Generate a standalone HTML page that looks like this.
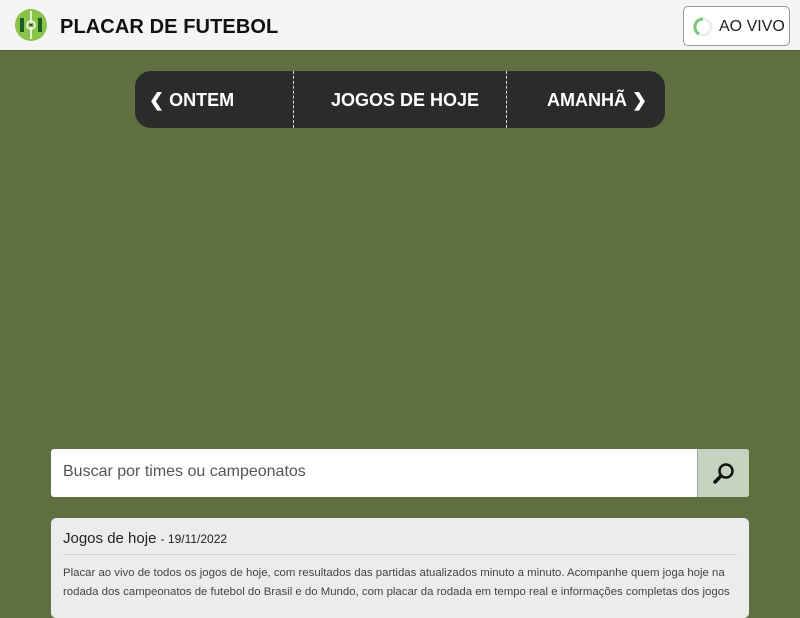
<!DOCTYPE html>
<html><head><meta charset="utf-8"><style>
*{margin:0;padding:0;box-sizing:border-box}
body{width:800px;height:600px;overflow:hidden;background:#5f6f40;font-family:"Liberation Sans",sans-serif}
.hdr{position:absolute;left:0;top:0;width:800px;height:51px;background:#f5f5f5;border-bottom:1px solid #4c5a33}
.logo{position:absolute;left:15px;top:9px}
.title{position:absolute;left:60px;top:16px;font-weight:bold;font-size:20px;color:#111;letter-spacing:0.1px}
.live{position:absolute;left:683px;top:6px;width:107px;height:40px;border:1px solid #999;border-radius:5px;background:#fff}
.live span{position:absolute;left:35px;top:11px;font-size:16px;color:#222}
.nav{position:absolute;left:135px;top:71px;width:530px;height:57px;background:#2b2b2b;border-radius:16px;color:#fff;font-weight:bold;font-size:18px}
.nav div{position:absolute;top:19px}
.d{position:absolute;top:0;width:0;height:57px;border-left:1px dashed #ddd}
.search{position:absolute;left:51px;top:449px;width:698px;height:48px;background:#fff;border-radius:3px;overflow:hidden}
.search span{position:absolute;left:12px;top:14px;font-size:16px;color:#555}
.btn{position:absolute;right:0;top:0;width:52px;height:48px;background:#c3d3bf;border-left:1px solid #9aa}
.card{position:absolute;left:51px;top:518px;width:698px;height:100px;background:#ebecee;border-radius:5px}
.card h2{position:absolute;left:12px;top:12px;font-size:15px;font-weight:normal;color:#222}
.card h2 small{font-size:12px}
.card hr{position:absolute;left:12px;top:36px;width:674px;border:0;border-top:1px solid #d0d0d0}
.card p{position:absolute;left:12px;top:46px;white-space:nowrap;font-size:11.4px;line-height:19px;color:#444}
</style></head><body>
<div class="hdr">
<svg class="logo" width="32" height="32" viewBox="0 0 32 32"><circle cx="16" cy="16" r="16" fill="#8bc34a"/><rect x="5" y="9" width="4" height="14" fill="#1b5e20"/><rect x="23" y="9" width="4" height="14" fill="#1b5e20"/><line x1="16" y1="2" x2="16" y2="30" stroke="#fff" stroke-width="1.5"/><circle cx="16" cy="16" r="4" fill="none" stroke="#fff" stroke-width="1.5"/><circle cx="16" cy="16" r="1.5" fill="#1b5e20"/></svg>
<div class="title">PLACAR DE FUTEBOL</div>
<div class="live"><svg style="position:absolute;left:9px;top:10px" width="20" height="20" viewBox="0 0 20 20"><circle cx="10" cy="10" r="8" fill="none" stroke="#eee" stroke-width="3"/><path d="M10 2A8 8 0 0 0 6 17" fill="none" stroke="#7bc47b" stroke-width="3"/></svg><span>AO VIVO</span></div>
</div>
<div class="nav">
<div style="left:14px">&#10094; ONTEM</div>
<span class="d" style="left:158px"></span>
<div style="left:196px">JOGOS DE HOJE</div>
<span class="d" style="left:371px"></span>
<div style="left:412px">AMANHÃ &#10095;</div>
</div>
<div class="search"><span>Buscar por times ou campeonatos</span><div class="btn"><svg style="position:absolute;left:15px;top:13px" width="22" height="22" viewBox="0 0 22 22"><circle cx="13" cy="9" r="6.5" fill="none" stroke="#111" stroke-width="2.5"/><line x1="8" y1="14" x2="2" y2="20" stroke="#111" stroke-width="3.5" stroke-linecap="round"/></svg></div></div>
<div class="card"><h2>Jogos de hoje <small>- 19/11/2022</small></h2><hr><p>Placar ao vivo de todos os jogos de hoje, com resultados das partidas atualizados minuto a minuto. Acompanhe quem joga hoje na<br>rodada dos campeonatos de futebol do Brasil e do Mundo, com placar da rodada em tempo real e informações completas dos jogos</p></div>
</body></html>
